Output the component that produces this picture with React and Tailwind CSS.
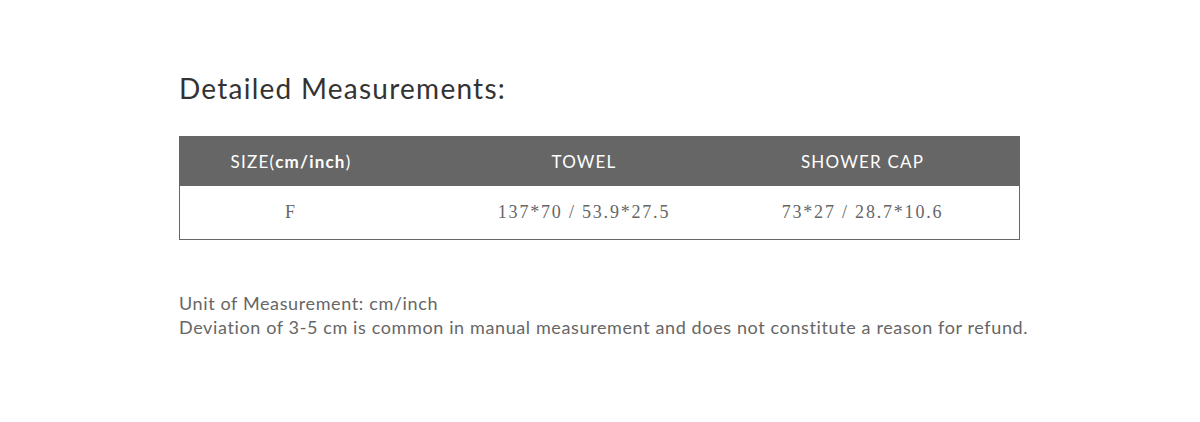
import React from "react";

const sans = { fontFamily: "Lato, 'Open Sans', sans-serif" };

export default function App() {
  return (
    <div className="w-[1200px] h-[422px] bg-white pl-[179px] pt-[70px]" style={sans}>
      <h1 className="text-[28px] leading-[36px] text-[#333] font-normal tracking-[1.25px]">
        Detailed Measurements:
      </h1>
      <div className="mt-[30px] w-[841px] border border-[#666]">
        <div className="grid grid-cols-[222px_364px_1fr] h-[49px] items-center bg-[#666] text-white text-[17px] tracking-[1.2px]">
          <div className="text-center">
            SIZE(<span className="font-bold">cm/inch</span>)
          </div>
          <div className="text-center">TOWEL</div>
          <div className="text-center pr-[60px]">SHOWER CAP</div>
        </div>
        <div
          className="grid grid-cols-[222px_364px_1fr] h-[53px] items-center text-[#666] text-[18px] tracking-[1.8px]"
          style={{ fontFamily: "'Liberation Serif', 'DejaVu Serif', serif" }}
        >
          <div className="text-center">F</div>
          <div className="text-center">137*70 / 53.9*27.5</div>
          <div className="text-center pr-[60px]">73*27 / 28.7*10.6</div>
        </div>
      </div>
      <div className="mt-[51px] text-[18px] leading-[24px] text-[#666] tracking-[0.62px]">
        <p>Unit of Measurement: cm/inch</p>
        <p>Deviation of 3-5 cm is common in manual measurement and does not constitute a reason for refund.</p>
      </div>
    </div>
  );
}
